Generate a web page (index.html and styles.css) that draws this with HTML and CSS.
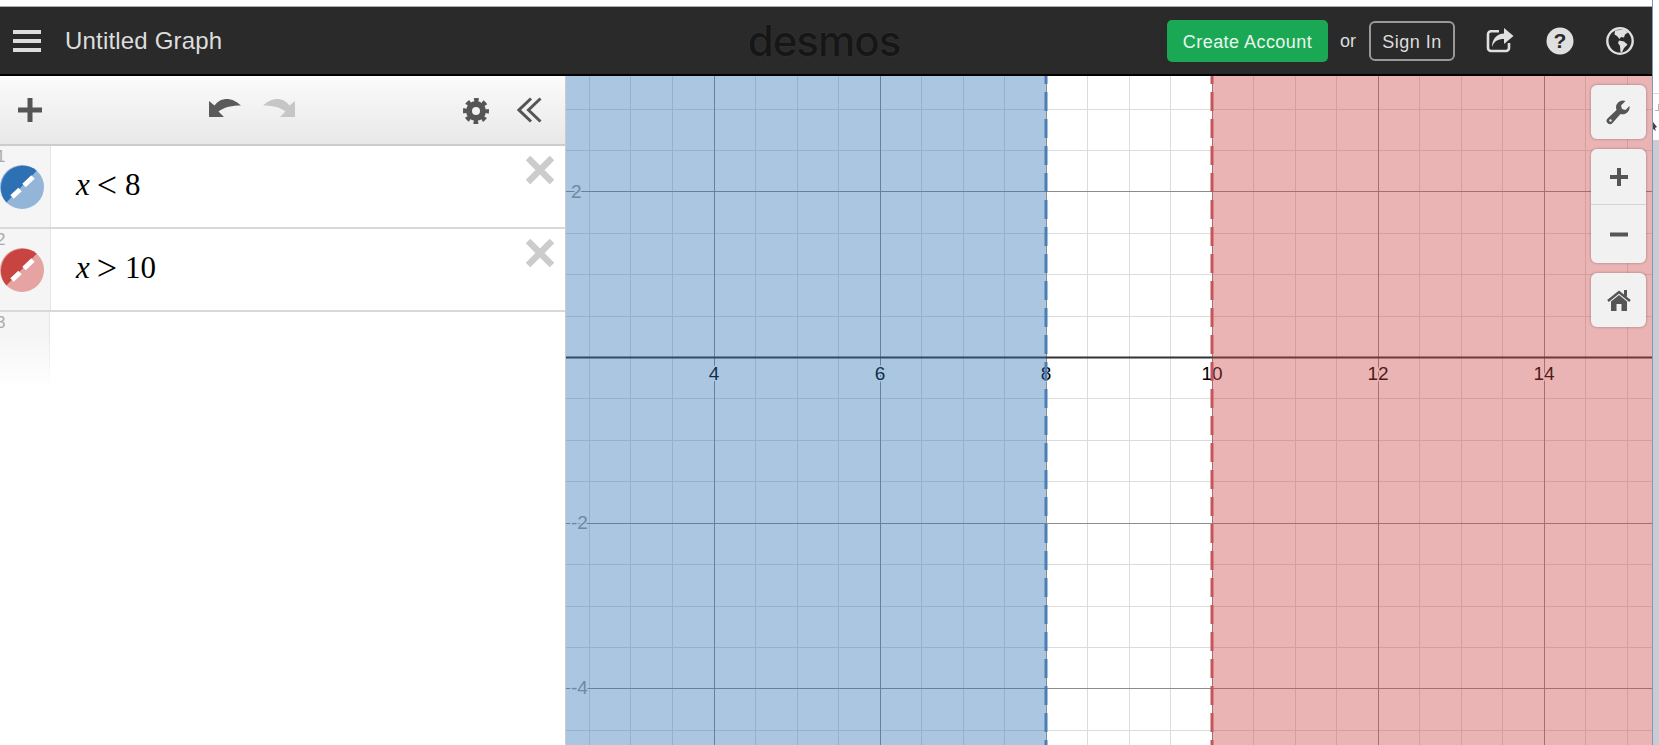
FILE: index.html
```html
<!DOCTYPE html>
<html lang="en">
<head>
    <meta charset="UTF-8" />
    <title>Desmos | Graphing Calculator</title>
    <link rel="stylesheet" href="styles.css">
</head>
<body>
    <div class="page">
        <div class="app">
            <div class="top-strip"></div>

            <div class="header">
                <div class="header-left">
                    <div class="burger"><span></span><span></span><span></span></div>
                    <div class="graph-title">Untitled Graph</div>
                </div>
                <div class="logo">desmos</div>
                <div class="header-right">
                    <button class="btn-create">Create Account</button>
                    <span class="or">or</span>
                    <button class="btn-signin">Sign In</button>
                    <svg class="head-icon share" width="28" height="25" viewBox="0 0 28 25">
                        <path d="M13 3.2H5a3 3 0 0 0-3 3V20a3 3 0 0 0 3 3h15a3 3 0 0 0 3-3v-5" fill="none" stroke="#e0e0e0" stroke-width="2.6"/>
                        <path d="M18 0l9.5 8L18 16v-5C12 11 8 13 6 19 6 11 11 5.5 18 5.5z" fill="#e0e0e0"/>
                    </svg>
                    <svg class="head-icon help" width="28" height="28" viewBox="0 0 28 28">
                        <circle cx="14" cy="14" r="13.5" fill="#e0e0e0"/>
                        <text x="14" y="21" class="help-mark">?</text>
                    </svg>
                    <svg class="head-icon globe" width="28" height="28" viewBox="0 0 28 28">
                        <circle cx="14" cy="14" r="12.7" fill="none" stroke="#e0e0e0" stroke-width="2.4"/>
                        <path d="M9 3.5l9-1 4 3-3 2-1 3-3-.5-1.500 2L11 9 8.500 7.500z" fill="#e0e0e0"/>
                        <path d="M13 13.500l5 1 3.500 3-3.500 3.500-2 4.500-1.500-.5-.5-6-2-3z" fill="#e0e0e0"/>
                    </svg>
                </div>
            </div>

            <div class="main-content">
                <div class="panel">
                    <div class="toolbar">
                        <svg class="icon-add" width="26" height="26" viewBox="0 0 26 26">
                            <path d="M13 1v24M1 13h24" stroke="#555" stroke-width="5" fill="none"/>
                        </svg>
                        <div class="history">
                            <svg width="32" height="18" viewBox="0 0 32 18">
                                <path d="M0 2v16h15l-5.500-5.500C15 8 24 6.500 32 6.500 27 2 22 0 18 0 13 0 9 2 5.500 6.500z" fill="#5a5a5a"/>
                            </svg>
                            <svg width="32" height="18" viewBox="0 0 32 18">
                                <path d="M32 2v16H17l5.500-5.500C17 8 8 6.500 0 6.500 5 2 10 0 14 0c5 0 9 2 12.500 6.500z" fill="#c6c6c6"/>
                            </svg>
                        </div>
                        <svg class="icon-gear" width="26" height="26" viewBox="0 0 26 26">
                            <circle cx="13" cy="13" r="7" fill="none" stroke="#555" stroke-width="6"/>
                            <circle cx="13" cy="13" r="11" fill="none" stroke="#555" stroke-width="4" stroke-dasharray="4.600 4.040" stroke-dashoffset="2.300"/>
                        </svg>
                        <svg class="icon-collapse" width="25" height="26" viewBox="0 0 25 26">
                            <path d="M14 1.500L2 13l12 11.500M23.500 1.500L11.500 13l12 11.500" fill="none" stroke="#555" stroke-width="3"/>
                        </svg>
                    </div>

                    <div class="expr">
                        <div class="gutter">
                            <div class="row-num">1</div>
                            <svg width="44" height="44" viewBox="0 0 44 44">
                                <circle cx="22" cy="22" r="22" fill="#92b5d8"/>
                                <path d="M36.700 5.700A22 22 0 0 0 6.400 37.400z" fill="#2d70b3"/>
                                <path d="M12 32l8-7.500M24 20.500L33 12" stroke="#fff" stroke-width="5" fill="none"/>
                            </svg>
                        </div>
                        <div class="math"><i>x</i><span class="op">&lt;</span><span>8</span></div>
                        <svg class="icon-close" width="28" height="28" viewBox="0 0 28 28">
                            <path d="M2 2l24 24M26 2L2 26" stroke="#ccc" stroke-width="6.500" fill="none"/>
                        </svg>
                    </div>

                    <div class="expr">
                        <div class="gutter">
                            <div class="row-num">2</div>
                            <svg width="44" height="44" viewBox="0 0 44 44">
                                <circle cx="22" cy="22" r="22" fill="#e5a3a1"/>
                                <path d="M36.700 5.700A22 22 0 0 0 6.400 37.400z" fill="#c74440"/>
                                <path d="M12 32l8-7.500M24 20.500L33 12" stroke="#fff" stroke-width="5" fill="none"/>
                            </svg>
                        </div>
                        <div class="math"><i>x</i><span class="op">&gt;</span><span>10</span></div>
                        <svg class="icon-close" width="28" height="28" viewBox="0 0 28 28">
                            <path d="M2 2l24 24M26 2L2 26" stroke="#ccc" stroke-width="6.500" fill="none"/>
                        </svg>
                    </div>

                    <div class="expr-empty">
                        <div class="gutter-fade">
                            <div class="row-num">3</div>
                        </div>
                    </div>
                </div>

                <div class="graph">
                    <!-- viewBox keeps page coordinates so the grid numbers are easy to check -->
                    <svg class="plot" width="1086" height="669" viewBox="566 76 1086 669">
                        <g class="minor">
                            <path d="M589.500 76V745M630.500 76V745M672.500 76V745M755.500 76V745M797.500 76V745M838.500 76V745M921.500 76V745M963.500 76V745M1004.500 76V745M1087.500 76V745M1129.500 76V745M1170.500 76V745M1253.500 76V745M1295.500 76V745M1336.500 76V745M1419.500 76V745M1461.500 76V745M1502.500 76V745M1585.500 76V745M1627.500 76V745"/>
                            <path d="M566 109.500H1652M566 150.500H1652M566 233.500H1652M566 274.500H1652M566 316.500H1652M566 398.500H1652M566 440.500H1652M566 481.500H1652M566 564.500H1652M566 606.500H1652M566 647.500H1652M566 730.500H1652"/>
                        </g>
                        <g class="major">
                            <path d="M714.500 76V745M880.500 76V745M1046.500 76V745M1212.500 76V745M1378.500 76V745M1544.500 76V745"/>
                            <path d="M566 191.500H1652M566 523.500H1652M566 688.500H1652"/>
                        </g>
                        <path class="axis" d="M566 357.500H1652"/>

                        <g class="x-labels">
                            <text x="714" y="380">4</text>
                            <text x="880" y="380">6</text>
                            <text x="1046" y="380">8</text>
                            <text x="1212" y="380">10</text>
                            <text x="1378" y="380">12</text>
                            <text x="1544" y="380">14</text>
                        </g>
                        <g class="y-labels">
                            <text x="571" y="198">2</text>
                            <text x="571" y="529">-2</text>
                            <text x="571" y="694">-4</text>
                        </g>

                        <rect class="shade-blue" x="566" y="76" width="480" height="669"/>
                        <rect class="shade-red" x="1212" y="76" width="440" height="669"/>
                        <path class="edge-blue" d="M1046 11V745"/>
                        <path class="edge-red" d="M1212 11V745"/>
                    </svg>

                    <div class="graph-tools">
                        <div class="tool-btn tool-wrench">
                            <svg width="25" height="25" viewBox="0 0 25 25">
                                <path d="M23.500 6a7 7 0 0 1-9 8l-8 9a3 3 0 0 1-5-4.500l9-8.500a7 7 0 0 1 9-9L15 5.500 16 9l3.500 1z" fill="#555"/>
                                <circle cx="4.500" cy="20.500" r="1.200" fill="#f1f1f1"/>
                            </svg>
                        </div>
                        <div class="tool-group">
                            <div class="tool-btn tool-plus">
                                <svg width="18" height="18" viewBox="0 0 18 18">
                                    <path d="M9 0v18M0 9h18" stroke="#555" stroke-width="4"/>
                                </svg>
                            </div>
                            <div class="tool-btn tool-minus">
                                <svg width="18" height="5" viewBox="0 0 18 5">
                                    <path d="M0 2.500h18" stroke="#555" stroke-width="4"/>
                                </svg>
                            </div>
                        </div>
                        <div class="tool-btn tool-home">
                            <svg width="24" height="21" viewBox="0 0 24 21">
                                <path d="M1 11L12 2l11 9" fill="none" stroke="#555" stroke-width="2.500"/>
                                <path d="M17 0h3v7l-3-2z" fill="#555"/>
                                <path d="M4 11.500l8-6.500 8 6.500V21h-5.500v-7h-5v7H4z" fill="#555"/>
                            </svg>
                        </div>
                    </div>
                </div>
            </div>
        </div>

        <div class="side">
            <div class="side-top">
                <svg width="7" height="140" viewBox="0 0 7 140">
                    <path d="M0 93.500h7" stroke="#d8d8d8"/>
                    <path d="M5.500 104v6M2 110.500h5" stroke="#b5b5b5"/>
                    <path d="M0 122l4 5-2 1 1 3-3-2z" fill="#444"/>
                </svg>
            </div>
            <div class="side-rest"></div>
        </div>
    </div>
</body>
</html>
```

FILE: styles.css
```css
html, body {
    margin: 0;
    height: 100%;
    overflow: hidden;
}

body {
    background: #fff;
    font-family: 'Liberation Sans', Arial, sans-serif;
}

.page {
    display: flex;
    height: 100vh;
}

.app {
    width: 1652px;
    display: flex;
    flex-direction: column;
}

.top-strip {
    height: 6px;
    background: #fff;
    border-bottom: 1px solid #aaa;
}

/* header */
.header {
    height: 67px;
    background: #2a2a2a;
    border-bottom: 2px solid #000;
    display: grid;
    grid-template-columns: 1fr auto 1fr;
    align-items: center;
}

.header-left {
    display: flex;
    align-items: center;
    padding-left: 13px;
}

.burger {
    display: flex;
    flex-direction: column;
    gap: 5px;
    width: 28px;
}

.burger span {
    height: 4px;
    background: #ddd;
}

.graph-title {
    margin-left: 24px;
    color: #ddd;
    font-size: 24px;
    letter-spacing: 0.18px;
}

.logo {
    margin-right: 4px;
    color: #161616;
    font-family: 'Inter', sans-serif;
    font-size: 42px;
    font-weight: 500;
    letter-spacing: -1px;
    line-height: 50px;
    text-shadow: 0 0 2px #3c3c3c;
}

.header-right {
    display: flex;
    align-items: center;
    justify-content: flex-end;
    padding-right: 18px;
}

button {
    font-family: inherit;
    font-size: 18px;
    cursor: pointer;
}

.btn-create {
    width: 161px;
    height: 42px;
    padding: 3px 0 0;
    background: #1aa855;
    color: #eaf6ee;
    border: none;
    border-radius: 5px;
    letter-spacing: 0.45px;
}

.or {
    margin: 2px 13px 0 12px;
    color: #ddd;
    font-size: 18px;
}

.btn-signin {
    width: 86px;
    height: 40px;
    padding: 3px 0 0;
    background: transparent;
    color: #ddd;
    border: 2px solid #999;
    border-radius: 6px;
    letter-spacing: 0.5px;
}

.head-icon {
    display: block;
}

.share {
    margin-left: 31px;
}

.help {
    margin-left: 32px;
}

.globe {
    margin-left: 32px;
}

.help-mark {
    fill: #2a2a2a;
    font-family: 'Liberation Sans', sans-serif;
    font-size: 21px;
    font-weight: bold;
    text-anchor: middle;
}

/* main */
.main-content {
    flex: 1;
    display: flex;
    min-height: 0;
}

.panel {
    width: 565px;
    border-right: 1px solid #ccc;
    background: #fff;
    overflow: hidden;
}

.toolbar {
    height: 68px;
    border-bottom: 2px solid #ccc;
    background: linear-gradient(#fbfbfb, #e8e8e8);
    display: flex;
    align-items: center;
    padding: 0 23px 0 17px;
}

.history {
    display: flex;
    gap: 22px;
    margin-left: 166px;
    margin-top: -5px;
}

.icon-gear {
    margin-left: auto;
    margin-top: 2px;
}

.icon-collapse {
    margin-left: 28px;
}

.expr {
    height: 81px;
    border-bottom: 2px solid #d9d9d9;
    display: flex;
}

.gutter {
    width: 50px;
    background: #f5f5f5;
    border-right: 1px solid #e6e6e6;
    padding-top: 2px;
}

.gutter svg {
    display: block;
}

.row-num {
    margin-left: -4px;
    height: 17px;
    color: #aaa;
    font-size: 17px;
    line-height: 17px;
}

.math {
    flex: 1;
    display: flex;
    align-items: center;
    padding: 0 0 3px 25px;
    color: #000;
    font-family: 'Liberation Serif', 'Times New Roman', serif;
    font-size: 31px;
}

.math .op {
    margin: 0 8px 0 7px;
    font-size: 36px;
    font-weight: 400;
}

.icon-close {
    margin: 10px 11px 0 0;
}

.expr-empty {
    height: 76px;
}

.gutter-fade {
    width: 50px;
    height: 100%;
    padding-top: 2px;
    box-sizing: border-box;
    background: linear-gradient(#f5f5f5 30%, #fff);
    border-right: 1px solid;
    border-image: linear-gradient(#e6e6e6 30%, #fff) 1;
}

/* graph */
.graph {
    flex: 1;
    position: relative;
    overflow: hidden;
    background: #fff;
}

.plot {
    display: block;
}

.minor path {
    stroke: #dcdcdc;
    fill: none;
}

.major path {
    stroke: #8c8c8c;
    fill: none;
}

.axis {
    stroke: #333;
    stroke-width: 2;
}

.x-labels text,
.y-labels text {
    font-family: 'Liberation Sans', sans-serif;
    font-size: 19px;
    paint-order: stroke;
    stroke: #fff;
    stroke-width: 3px;
    stroke-linejoin: round;
}

.x-labels text {
    fill: #000;
    text-anchor: middle;
}

.y-labels text {
    fill: #999;
}

.shade-blue {
    fill: #2d70b3;
    fill-opacity: 0.4;
}

.shade-red {
    fill: #c74440;
    fill-opacity: 0.4;
}

.edge-blue,
.edge-red {
    fill: none;
    stroke-width: 3;
    stroke-dasharray: 19 8;
}

.edge-blue {
    stroke: #4a7fb5;
}

.edge-red {
    stroke: #c4555a;
}

.graph-tools {
    position: absolute;
    top: 9px;
    right: 6px;
    display: flex;
    flex-direction: column;
    gap: 10px;
    width: 55px;
}

.tool-btn {
    display: flex;
    align-items: center;
    justify-content: center;
    background: #f1f1f1;
}

.tool-wrench,
.tool-home {
    height: 54px;
    border-radius: 6px;
    box-shadow: 0 0 2px 1px rgba(0, 0, 0, 0.15);
}

.tool-group {
    border-radius: 6px;
    box-shadow: 0 0 2px 1px rgba(0, 0, 0, 0.15);
    overflow: hidden;
}

.tool-plus {
    height: 55px;
    border-bottom: 1px solid #d4d4d4;
}

.tool-minus {
    height: 58px;
}

/* what is left of the window behind, on the right edge */
.side {
    flex: 1;
    display: flex;
    flex-direction: column;
    border-left: 1px solid #7f97b8;
}

.side-top {
    height: 140px;
    background: #fff;
}

.side-top svg {
    display: block;
}

.side-rest {
    flex: 1;
    background: #c9ccd2;
}
```
